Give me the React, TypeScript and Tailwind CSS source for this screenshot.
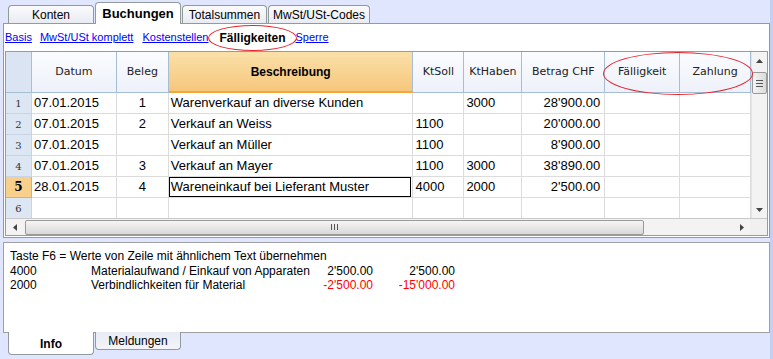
import React from "react";

const cols = [
  { key: "num", w: 26 },
  { key: "datum", w: 85, label: "Datum" },
  { key: "beleg", w: 52, label: "Beleg" },
  { key: "beschr", w: 245, label: "Beschreibung" },
  { key: "soll", w: 51, label: "KtSoll" },
  { key: "haben", w: 58, label: "KtHaben" },
  { key: "betrag", w: 83, label: "Betrag CHF" },
  { key: "faell", w: 75, label: "Fälligkeit" },
  { key: "zahl", w: 71, label: "Zahlung" },
];

const rows = [
  ["1", "07.01.2015", "1", "Warenverkauf an diverse Kunden", "", "3000", "28'900.00", "", ""],
  ["2", "07.01.2015", "2", "Verkauf an Weiss", "1100", "", "20'000.00", "", ""],
  ["3", "07.01.2015", "", "Verkauf an Müller", "1100", "", "8'900.00", "", ""],
  ["4", "07.01.2015", "3", "Verkauf an Mayer", "1100", "3000", "38'890.00", "", ""],
  ["5", "28.01.2015", "4", "Wareneinkauf bei Lieferant Muster", "4000", "2000", "2'500.00", "", ""],
  ["6", "", "", "", "", "", "", "", ""],
];

function Tab({ label, active, w }: { label: string; active?: boolean; w: number }) {
  return (
    <div
      style={{ width: w }}
      className={
        active
          ? "relative z-10 h-[22px] -mb-px rounded-t-[4px] border border-b-0 border-[#919b9c] bg-white flex items-center justify-center text-[13px] font-bold text-black"
          : "h-[18px] rounded-t-[4px] border border-b-0 border-[#919b9c] bg-gradient-to-b from-[#fbfbfd] to-[#e9ebf3] flex items-center justify-center text-[12px] text-black"
      }
    >
      {label}
    </div>
  );
}

export default function App() {
  return (
    <div
      className="relative w-[773px] h-[359px] overflow-hidden bg-[#dfe6fd] text-black"
      style={{ fontFamily: "'Liberation Sans', Arial, sans-serif" }}
    >
      {/* right edge strip */}
      <div className="absolute right-0 top-0 h-full w-[3px] bg-[#c3d0f3]" />

      {/* top tabs */}
      <div className="flex items-end h-[23px] pl-[8px] gap-[1px]">
        <Tab label="Konten" w={86} />
        <Tab label="Buchungen" w={86} active />
        <Tab label="Totalsummen" w={85} />
        <Tab label="MwSt/USt-Codes" w={102} />
      </div>

      {/* main panel */}
      <div className="ml-[3px] w-[767px] h-[215px] border border-[#919b9c] bg-white flex flex-col">
        {/* links */}
        <div className="h-[27px] flex items-center text-[11px] pl-[1px]">
          <span className="text-[#0000ff] underline">Basis</span>
          <span className="ml-[8px] text-[#0000ff] underline">MwSt/USt komplett</span>
          <span className="ml-[9px] text-[#0000ff] underline">Kostenstellen</span>
          <span className="ml-[11px] font-bold text-[12px]">Fälligkeiten</span>
          <span className="ml-[10px] text-[#0000ff] underline">Sperre</span>
        </div>

        {/* grid */}
        <div className="ml-[1px] w-[763px] h-[185px] border border-[#9a9a9a] flex flex-col">
          <div className="flex flex-1 min-h-0">
            <div className="w-[745px] flex flex-col">
              {/* header */}
              <div className="flex h-[41px]">
                {cols.map((c) => {
                  if (c.key === "num")
                    return <div key={c.key} style={{ width: c.w }} className="h-full bg-[#dbe4f3] border-r border-b border-[#a6bed4]" />;
                  if (c.key === "beschr")
                    return (
                      <div key={c.key} style={{ width: c.w }} className="h-full flex items-center justify-center bg-gradient-to-b from-[#fae0a8] to-[#f6c77c] border-r border-[#a6bed4] border-b-2 border-b-[#f2a63c] text-[12px] font-bold">
                        {c.label}
                      </div>
                    );
                  return (
                    <div key={c.key} style={{ width: c.w, fontFamily: "'DejaVu Sans', sans-serif" }} className="h-full flex items-center justify-center bg-gradient-to-b from-[#fbfcff] to-[#eef1fa] border-r border-b border-[#a6bed4] text-[11px] text-[#222]">
                      {c.label}
                    </div>
                  );
                })}
              </div>
              {/* rows */}
              <div className="flex-1 overflow-hidden">
                {rows.map((r, ri) => (
                  <div key={ri} className="flex h-[21px]">
                    {cols.map((c, ci) => {
                      const v = r[ci];
                      if (c.key === "num") {
                        const act = ri === 4;
                        return (
                          <div
                            key={c.key}
                            style={{ width: c.w, fontFamily: "'DejaVu Serif', serif" }}
                            className={
                              act
                                ? "h-full flex items-center justify-center bg-[#f8cf8b] border-r border-b border-[#e9ad55] text-[12px] font-bold"
                                : "h-full flex items-center justify-center bg-[#dde6f3] border-r border-b border-[#c8d3e3] text-[10px] text-[#333]"
                            }
                          >
                            {v}
                          </div>
                        );
                      }
                      const align =
                        c.key === "beleg" ? "justify-center" : c.key === "betrag" ? "justify-end pr-[4px]" : "justify-start pl-[2px]";
                      const focus = ri === 4 && c.key === "beschr";
                      return (
                        <div
                          key={c.key}
                          style={{ width: c.w }}
                          className={`relative h-full flex items-center ${align} border-r border-b border-[#dcdcdc] text-[13px] whitespace-nowrap overflow-hidden`}
                        >
                          {focus && <div className="absolute left-0 top-0 right-[1px] bottom-0 border border-black" />}
                          {v}
                        </div>
                      );
                    })}
                  </div>
                ))}
              </div>
            </div>
            {/* vertical scrollbar */}
            <div className="w-[17px] bg-[#f3f3f3] border-l border-[#e4e4e4] flex flex-col items-center relative">
              <div className="h-[17px] flex items-center justify-center">
                <svg width="7" height="4" viewBox="0 0 7 4"><path d="M0 4 L3.5 0 L7 4 Z" fill="#444" /></svg>
              </div>
              <div className="mt-[3px] w-[15px] h-[22px] rounded-[2px] border border-[#9a9a9a] bg-gradient-to-r from-[#f4f4f4] to-[#dcdcdc] flex flex-col items-center justify-center gap-[2px]">
                <div className="w-[7px] h-px bg-[#555]" />
                <div className="w-[7px] h-px bg-[#555]" />
                <div className="w-[7px] h-px bg-[#555]" />
              </div>
              <div className="flex-1" />
              <div className="h-[17px] flex items-center justify-center">
                <svg width="7" height="4" viewBox="0 0 7 4"><path d="M0 0 L3.5 4 L7 0 Z" fill="#444" /></svg>
              </div>
            </div>
          </div>
          {/* horizontal scrollbar */}
          <div className="h-[17px] flex border-t border-[#c8c8c8] bg-[#f3f3f3]">
            <div className="w-[745px] flex items-center">
              <div className="w-[17px] flex items-center justify-center">
                <svg width="4" height="7" viewBox="0 0 4 7"><path d="M4 0 L0 3.5 L4 7 Z" fill="#444" /></svg>
              </div>
              <div className="ml-[2px] w-[619px] h-[15px] rounded-[2px] border border-[#9a9a9a] bg-gradient-to-b from-[#f5f5f5] to-[#d9d9d9] flex items-center justify-center gap-[2px]">
                <div className="w-px h-[6px] bg-[#555]" />
                <div className="w-px h-[6px] bg-[#555]" />
                <div className="w-px h-[6px] bg-[#555]" />
              </div>
              <div className="flex-1" />
              <div className="w-[17px] flex items-center justify-center">
                <svg width="4" height="7" viewBox="0 0 4 7"><path d="M0 0 L4 3.5 L0 7 Z" fill="#444" /></svg>
              </div>
            </div>
            <div className="w-[17px] bg-[#f0f0f0]" />
          </div>
        </div>
      </div>

      {/* info panel */}
      <div className="ml-[3px] mt-[4px] w-[767px] h-[91px] border border-[#a0a0a0] bg-white pt-[6px] pl-[6px] text-[12px] leading-[14.5px] whitespace-nowrap">
        <div>Taste F6 = Werte von Zeile mit ähnlichem Text übernehmen</div>
        <div className="flex">
          <span className="w-[81px]">4000</span>
          <span className="w-[200px]">Materialaufwand / Einkauf von Apparaten</span>
          <span className="w-[82px] text-right">2'500.00</span>
          <span className="w-[82px] text-right">2'500.00</span>
        </div>
        <div className="flex">
          <span className="w-[81px]">2000</span>
          <span className="w-[200px]">Verbindlichkeiten für Material</span>
          <span className="w-[82px] text-right text-[#ff0000]">-2'500.00</span>
          <span className="w-[82px] text-right text-[#ff0000]">-15'000.00</span>
        </div>
      </div>

      {/* bottom tabs */}
      <div className="flex items-start pl-[8px] gap-[1px] -mt-px">
        <div className="relative z-10 w-[86px] h-[23px] rounded-b-[4px] border border-t-0 border-[#919b9c] bg-white flex items-center justify-center pt-[2px] text-[12px] font-bold">
          Info
        </div>
        <div className="w-[86px] h-[18px] rounded-b-[4px] border border-t-0 border-[#919b9c] bg-gradient-to-t from-[#f4f5fa] to-[#e8ebf4] flex items-center justify-center text-[12px]">
          Meldungen
        </div>
      </div>

      {/* red ellipses */}
      <div className="absolute left-[208px] top-[25px] w-[89px] h-[26px] rounded-[50%] border border-[#e8232a]" />
      <div className="absolute left-[603px] top-[52px] w-[150px] h-[43px] rounded-[50%] border border-[#e8232a]" />
    </div>
  );
}
